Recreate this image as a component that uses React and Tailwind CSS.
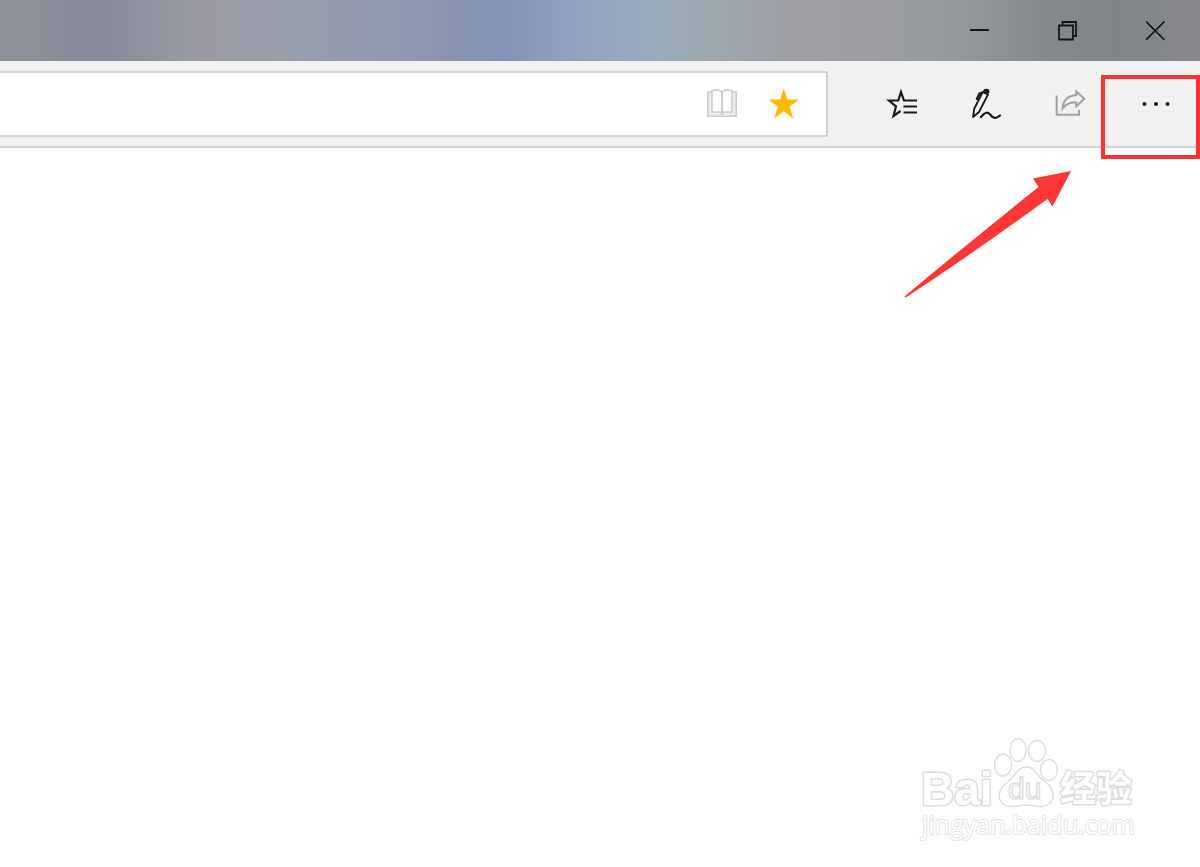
// src/App.jsx

const windowButton = "flex h-full w-22 items-center justify-center text-[#161616]";
const toolButton = "flex h-full w-[84px] items-center justify-center text-[#1a1a1a]";

function TitleBar() {
  return (
    <header className="flex h-[61px] items-stretch justify-end bg-[linear-gradient(90deg,#8f909a_0%,#8c9098_3%,#888b9a_6%,#888b9a_9%,#9195a0_13%,#9a9aa5_17%,#999ca8_21%,#969eab_25%,#929bad_29%,#8e98b0_34%,#8994b2_38%,#8593b6_42%,#8f9fbe_47%,#98a9c2_52%,#9badba_55%,#9ca8af_60%,#9e9fa6_65%,#9d9da2_69%,#9a9da0_75%,#94979a_81%,#85888c_87%,#808488_93%,#86888b_100%)]">
      <button type="button" aria-label="Minimize" className={windowButton}>
        <svg width="20" height="20" viewBox="0 0 20 20" fill="none" stroke="currentColor" strokeWidth="2">
          <path d="M0 9h19" />
        </svg>
      </button>
      <button type="button" aria-label="Restore" className={windowButton}>
        <svg width="20" height="20" viewBox="0 0 20 20" fill="none" stroke="currentColor" strokeWidth="1.8">
          <path d="M1 4.5h14v14H1zM4.500 4.500V1H18v14h-3" />
        </svg>
      </button>
      <button type="button" aria-label="Close" className={windowButton}>
        <svg width="20" height="20" viewBox="0 0 20 20" fill="none" stroke="currentColor" strokeWidth="1.7">
          <path d="M0 0.500l18.500 18.500M18.500 0.500l-18.500 18.500" />
        </svg>
      </button>
    </header>
  );
}

function AddressBar() {
  return (
    <form
      className="flex h-[66px] flex-1 items-center border-2 border-l-0 border-[#d3d3d3] bg-white pr-[26px]"
      onSubmit={(e) => e.preventDefault()}
    >
      <input type="text" aria-label="Address" className="h-full min-w-0 flex-1 px-4 text-xl outline-none" />
      <div className="flex items-center gap-[30px]">
        <button type="button" aria-label="Reading view" className="text-[#cdcdcd]">
          <svg width="32" height="32" viewBox="0 0 32 32" fill="none" stroke="currentColor" strokeWidth="1.6">
            <path d="M6 4H1.8v24.2h28.4V4H26" fill="#ededed" />
            <path d="M16 4C13.5 1.7 9 1.7 6 2.7V24h8l2 1.5 2-1.5h8V2.7C23 1.7 18.5 1.7 16 4z" fill="#fff" />
            <path d="M16 4v23" strokeWidth="2" />
          </svg>
        </button>
        <button type="button" aria-label="Favorite" className="text-[#ffb900]">
          <svg width="32" height="32" viewBox="0 0 32 32" fill="currentColor">
            <path d="M15.7 0.5L19.3 11.5H31L21.5 18.7L25.3 30.5L15.7 23.3L6.1 30.5L9.9 18.7L0.4 11.5H12.1z" />
          </svg>
        </button>
      </div>
    </form>
  );
}

function ToolBar() {
  return (
    <nav className="relative flex h-[87px] items-center border-b-2 border-[#d3d3d3] bg-[#f1f1f1]">
      <AddressBar />
      <div className="flex h-full items-center pt-px pl-8">
        <button type="button" aria-label="Hub" className={toolButton}>
          <svg width="32" height="32" viewBox="0 0 32 32" fill="none" stroke="currentColor" strokeWidth="2.2">
            <path d="M31 12.5H18L15 4L12.3 12.5H3L10 18.3L7.5 28L14.5 23" />
            <path d="M17.5 18.5H31M17.5 24.5H31" />
          </svg>
        </button>
        <button type="button" aria-label="Add notes" className={toolButton}>
          <svg
            width="32"
            height="32"
            viewBox="0 0 32 32"
            fill="none"
            stroke="currentColor"
            strokeWidth="1.8"
            strokeLinejoin="round"
            strokeLinecap="round"
          >
            <path d="M12.5 4.5L4.3 20.5L3 29L9 24L18 6.5L12.5 4z" />
            <path d="M13.5 4L14.8 1.8Q18.5 1 18.7 3.5L17.5 6z" fill="currentColor" />
            <path d="M11.5 5Q9.5 5 8.8 7L7 11" strokeWidth="2.4" />
            <path d="M11 29Q16.5 21.5 20.5 27T30 27.5" strokeWidth="2.2" />
          </svg>
        </button>
        <button type="button" aria-label="Share" className={toolButton}>
          <svg width="32" height="32" viewBox="0 0 32 32" fill="none" stroke="#a2a2a2" strokeWidth="2">
            <path d="M2.7 7.5v19.2h22.3v-5" />
            <path d="M22.3 3.5L30.3 10.8L22.3 18.5V14.5Q14 13.5 8.5 20.5Q9.5 8 22.3 7z" />
          </svg>
        </button>
        <button
          type="button"
          aria-label="Settings and more"
          className="flex h-full w-22 items-center justify-center text-[#1a1a1a]"
        >
          <svg width="32" height="32" viewBox="0 0 32 32" fill="currentColor">
            <circle cx="4.5" cy="16" r="2" />
            <circle cx="16" cy="16" r="2" />
            <circle cx="27.5" cy="16" r="2" />
          </svg>
        </button>
      </div>

      {/* Callout around the menu button */}
      <div className="pointer-events-none absolute top-[14px] right-0 h-[84px] w-[99px] border-4 border-[#ff3030]" />
      <svg
        className="pointer-events-none absolute top-[108px] right-32"
        width="168"
        height="130"
        viewBox="0 0 168 130"
        fill="#fd3636"
      >
        <path d="M167 2L129 9.5L134.5 18Q62 76 1 127Q0 129 2.5 128Q68 85 143.5 30L148.5 37.5z" />
      </svg>
    </nav>
  );
}

function Watermark() {
  return (
    <svg
      role="img"
      aria-label="Baidu Jingyan"
      width="220"
      height="105"
      viewBox="0 0 220 105"
      fill="#fff"
      stroke="#dcdcdc"
      strokeWidth="1.4"
      strokeLinejoin="round"
    >
      <text
        x="3"
        y="69"
        fontSize="46"
        strokeWidth="3"
        paintOrder="stroke"
        className="font-['Liberation_Sans',Arial,sans-serif] font-bold"
      >
        Bai
      </text>
      <path d="M108 31C118 31 118 40 126 45C135 51 138 61 132 67C125 74 117 69 108 69C99 69 91 73 85 68C78 61 81 52 90 46C97 40 99 31 108 31z" />
      <ellipse cx="85" cy="29" rx="8.5" ry="11" />
      <ellipse cx="100" cy="14" rx="8" ry="11.5" />
      <ellipse cx="119" cy="15" rx="8.5" ry="10.5" />
      <ellipse cx="131" cy="34" rx="8.5" ry="10.5" />
      <text x="90" y="63" fontSize="30" className="font-['Liberation_Sans',Arial,sans-serif]">
        du
      </text>
      <text
        x="142"
        y="66"
        fontSize="36"
        strokeWidth="3"
        paintOrder="stroke"
        className="font-['Noto_Sans_CJK_SC',sans-serif] font-bold"
      >
        经验
      </text>
      <text
        x="4"
        y="98"
        fontSize="25"
        strokeWidth="2"
        paintOrder="stroke"
        stroke="#e4e4e4"
        className="font-['Open_Sans',sans-serif]"
      >
        jingyan.baidu.com
      </text>
    </svg>
  );
}

export default function App() {
  return (
    <div className="flex min-h-screen flex-col bg-white font-['Liberation_Sans',Arial,sans-serif]">
      <TitleBar />
      <ToolBar />
      <main className="flex flex-1 items-end justify-end pr-[62px] pb-[26px]">
        <Watermark />
      </main>
    </div>
  );
}
